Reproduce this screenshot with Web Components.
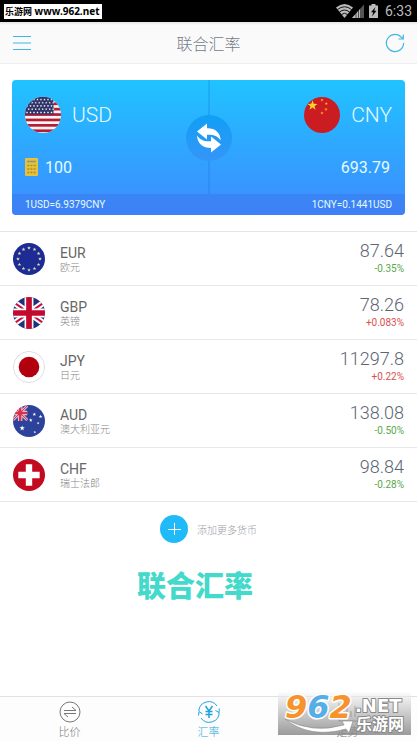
<!DOCTYPE html>
<html lang="zh-CN">
<head>
<meta charset="utf-8">
<meta name="viewport" content="width=device-width, initial-scale=1">
<title>联合汇率</title>
<style>
  body {
    margin: 0;
    background: #fff;
    font-family: Roboto, "Noto Sans CJK SC", sans-serif;
    font-weight: 300;
    color: #555;
  }
</style>
</head>
<body>
<rate-app></rate-app>

<script>
const star = (x, y, r, fill) => {
  const points = [];
  for (let i = 0; i < 10; i++) {
    const a = Math.PI * i / 5 - Math.PI / 2;
    const d = i % 2 ? r * 0.4 : r;
    points.push((x + d * Math.cos(a)).toFixed(2) + ',' + (y + d * Math.sin(a)).toFixed(2));
  }
  return `<polygon points="${points.join(' ')}" fill="${fill}"/>`;
};

const range = n => Array.from({ length: n }, (_, i) => i);

// every flag is drawn on a 36x36 field and clipped to a circle
const flags = {
  USD: `<rect width="36" height="36" fill="#f6f4f6"/>
    ${range(7).map(i => `<rect y="${i * 5.4}" width="36" height="2.7" fill="#b71c33"/>`).join('')}
    <rect width="28.5" height="17.4" fill="#2f3468"/>
    ${range(5).map(r => range(8).map(c => star(2 + c * 3.5 + (r % 2) * 1.7, 2.6 + r * 3.2, 1.3, '#fff')).join('')).join('')}`,
  CNY: `<rect width="36" height="36" fill="#cb1c22"/>
    ${star(8.5, 8.5, 5.2, '#fed130')}${star(18, 3, 1.8, '#fba52c')}${star(22.3, 6.5, 1.8, '#fba52c')}
    ${star(22, 12.3, 1.8, '#fba52c')}${star(18, 16, 1.8, '#fba52c')}`,
  EUR: `<rect width="36" height="36" fill="#1c2c94"/>
    ${range(12).map(i => star(18 + 12.4 * Math.sin(i * Math.PI / 6), 18 - 12.4 * Math.cos(i * Math.PI / 6), 2.2, '#e8dcae')).join('')}`,
  GBP: `<rect width="36" height="36" fill="#22307c"/>
    <path d="M-2 4 38 32M38 4-2 32" stroke="#fff" stroke-width="7"/>
    <path d="M-2 4 38 32M38 4-2 32" stroke="#c8103a" stroke-width="2.4"/>
    <path d="M18 0V36M0 18H36" stroke="#fff" stroke-width="10"/>
    <path d="M18 0V36M0 18H36" stroke="#c4092f" stroke-width="6.4"/>`,
  JPY: `<rect width="36" height="36" fill="#fff"/>
    <circle cx="18" cy="18" r="17.6" fill="none" stroke="#ccc" stroke-width="0.8"/>
    <circle cx="18" cy="18" r="11.6" fill="#b3000f"/>`,
  AUD: `<rect width="36" height="36" fill="#2d429b"/>
    <path d="M0 1 16 17M16 1 0 17" stroke="#f3dfe6" stroke-width="3"/>
    <path d="M8 0V18M0 9H16" stroke="#f3dfe6" stroke-width="5"/>
    <path d="M0 1 16 17M16 1 0 17" stroke="#d93250" stroke-width="1.2"/>
    <path d="M8 0V18M0 9H16" stroke="#d93250" stroke-width="3"/>
    ${star(10.3, 26, 3.2, '#fff')}${star(20, 17, 2.2, '#fff')}${star(24, 10.5, 2.2, '#fff')}
    ${star(31, 13, 2.2, '#fff')}${star(28.3, 20.5, 1.6, '#fff')}${star(24.5, 30.5, 1.6, '#fff')}`,
  CHF: `<rect width="36" height="36" fill="#c30a20"/>
    <path d="M14.4 6h7.2v8.4H30v7.2h-8.4V30h-7.2v-8.4H6v-7.2h8.4z" fill="#fff"/>`
};

class CurrencyFlag extends HTMLElement {
  connectedCallback() {
    const shadow = this.attachShadow({ mode: 'open' });
    shadow.innerHTML = `
      <style>
        :host {
          display: block;
          flex: none;
          width: var(--flag-size, 32px);
          height: var(--flag-size, 32px);
          border-radius: 50%;
          overflow: hidden;
        }
        svg { display: block; width: 100%; height: 100%; }
      </style>
      <svg viewBox="0 0 36 36" aria-hidden="true">${flags[this.getAttribute('code')]}</svg>
    `;
  }
}
customElements.define('currency-flag', CurrencyFlag);

class StatusBar extends HTMLElement {
  connectedCallback() {
    const shadow = this.attachShadow({ mode: 'open' });
    shadow.innerHTML = `
      <style>
        :host {
          display: flex;
          align-items: center;
          justify-content: space-between;
          height: 22px;
          padding: 0 5px 0 4px;
          background: #000;
          color: #bbb;
        }
        .site {
          padding: 0 2px 0 1px;
          background: #fff;
          color: #000;
          font: bold 10px/14px "Noto Sans", "Noto Sans CJK SC", sans-serif;
          white-space: nowrap;
        }
        .site small { font-size: 9px; }
        .state { display: flex; align-items: center; font-size: 14px; font-weight: 400; line-height: 22px; }
        time { margin-left: 5px; }
        svg { display: block; }
      </style>
      <span class="site"><small>乐游网</small> www.962.net</span>
      <div class="state">
        <svg width="44" height="16" viewBox="0 0 44 16" aria-hidden="true">
          <path d="M0 4.5Q8.500-2.500 17 4.500L8.500 15z" fill="#bbb"/>
          <path d="M1.500 6.500Q8.500 1 15.500 6.500M3.500 9Q8.500 5 13.500 9M5.500 11.500Q8.500 9 11.500 11.500" fill="none" stroke="#000" stroke-width="0.900"/>
          <path d="M16 15 28 1.500V15z" fill="#555"/>
          <path d="M16 15 24 6V15z" fill="#bbb"/>
          <path d="M20 9V15M22.500 6V15" stroke="#000" stroke-width="0.600"/>
          <path d="M33 2.500h2.500V1h4v1.500H42V15h-9z" fill="#bbb"/>
          <path d="M39.500 4 35 9.200h2.300L36 13.500 40.500 7.800h-2.300z" fill="#000"/>
        </svg>
        <time>6:33</time>
      </div>
    `;
  }
}
customElements.define('status-bar', StatusBar);

class AppHeader extends HTMLElement {
  connectedCallback() {
    const shadow = this.attachShadow({ mode: 'open' });
    shadow.innerHTML = `
      <style>
        :host {
          display: flex;
          align-items: center;
          justify-content: space-between;
          height: 41px;
          padding: 0 12px;
          border-bottom: 1px solid #eee;
          background: linear-gradient(#e4e4e4, #fafafa 3px);
        }
        h1 { margin: 0; font-size: 16px; font-weight: inherit; color: #747b8a; }
        button { padding: 0; border: 0; background: none; cursor: pointer; }
        svg { display: block; fill: none; stroke: #3fb6e3; }
      </style>
      <button aria-label="菜单">
        <svg width="20" height="20" viewBox="0 0 20 20"><path d="M1 3.500H19M1 10H19M1 16.500H19"/></svg>
      </button>
      <h1><slot></slot></h1>
      <button aria-label="刷新">
        <svg width="20" height="20" viewBox="0 0 20 20" stroke-width="1.200">
          <path d="M18.600 10A8.600 8.600 0 1 1 15.800 3.700L18 6M18.300 1.500V6H13.500"/>
        </svg>
      </button>
    `;
  }
}
customElements.define('app-header', AppHeader);

class ConvertCard extends HTMLElement {
  connectedCallback() {
    const shadow = this.attachShadow({ mode: 'open' });
    shadow.innerHTML = `
      <style>
        :host {
          display: block;
          position: relative;
          margin: 16px 12px;
          border-radius: 4px;
          overflow: hidden;
          background: linear-gradient(#20c3ff, #3e8bff);
          color: #e6fbff;
        }
        .sides { display: flex; height: 114px; }
        .side {
          --flag-size: 36px;
          flex: 1;
          display: flex;
          flex-direction: column;
          gap: 24px;
          box-sizing: border-box;
          padding: 17px 13px 0;
        }
        .side + .side { align-items: flex-end; border-left: 2px solid rgba(20,110,220,.22); }
        .currency { display: flex; align-items: center; gap: 11px; font-size: 21px; }
        .amount { display: flex; align-items: center; gap: 7px; height: 20px; font-size: 16px; font-weight: 400; }
        .side + .side .amount { padding-right: 2px; }
        input {
          width: 80px;
          padding: 0;
          border: 0;
          background: none;
          color: inherit;
          font: inherit;
          outline: 0;
        }
        svg { display: block; }
        .rates {
          display: flex;
          justify-content: space-between;
          padding: 0 13px;
          background: rgba(60,110,225,.35);
          font-size: 10px;
          font-weight: 400;
          line-height: 21px;
        }
        /* sits over the divider between both currencies */
        .swap {
          position: absolute;
          left: 50%;
          top: 50%;
          display: grid;
          place-items: center;
          width: 46px;
          height: 46px;
          margin: -33px 0 0 -23px;
          padding: 0;
          border: 0;
          border-radius: 50%;
          background: linear-gradient(#109ff5, #3595f8);
          cursor: pointer;
        }
      </style>
      <div class="sides">
        <div class="side">
          <div class="currency"><currency-flag code="USD"></currency-flag><span>USD</span></div>
          <label class="amount">
            <svg width="13" height="18" viewBox="0 0 13 18" aria-hidden="true">
              <rect width="13" height="18" rx="1" fill="#e6c13c"/>
              <path d="M2 3.500h9" stroke="#7f9a83" stroke-width="1.500"/>
              <path d="M2.500 7.500h8M2.500 11h8M2.500 14.500h8" stroke="#a98826" stroke-width="1.600" stroke-dasharray="1.800 1.300"/>
            </svg>
            <input value="100" inputmode="decimal" aria-label="USD">
          </label>
        </div>
        <div class="side">
          <div class="currency"><currency-flag code="CNY"></currency-flag><span>CNY</span></div>
          <div class="amount">693.79</div>
        </div>
      </div>
      <div class="rates"><span>1USD=6.9379CNY</span><span>1CNY=0.1441USD</span></div>
      <button class="swap" aria-label="互换">
        <svg width="28" height="32" viewBox="0 0 28 32" fill="#fff">
          <path d="M2 9.500 12 1.500V6.200C20 6 25.500 10.500 25.700 18.500C22.500 13.500 18 12.500 12 12.800V17.500z"/>
          <path d="M26 22.500 16 30.500V26C8 26 2.200 21.500 2 13.500C5.500 18.700 10 19.500 16 19.200V14.500z"/>
        </svg>
      </button>
    `;
  }
}
customElements.define('convert-card', ConvertCard);

class RateRow extends HTMLElement {
  connectedCallback() {
    const shadow = this.attachShadow({ mode: 'open' });
    const code = this.getAttribute('code');
    const change = this.getAttribute('change');
    shadow.innerHTML = `
      <style>
        :host {
          display: flex;
          align-items: center;
          gap: 15px;
          box-sizing: border-box;
          height: 54px;
          padding: 0 13px;
          border-bottom: 1px solid #e8e8e8;
        }
        div { display: flex; flex-direction: column; }
        .value { margin-left: auto; text-align: right; }
        .code { font-size: 14px; font-weight: 400; line-height: 18px; color: #666; }
        .name { font-size: 10px; line-height: 12px; color: #858585; }
        .rate { font-size: 18px; line-height: 20px; color: #5d6574; }
        .change { font-size: 10px; font-weight: 400; line-height: 16px; color: #5aa84c; }
        .change.up { color: #d9514e; }
      </style>
      <currency-flag code="${code}"></currency-flag>
      <div>
        <span class="code">${code}</span>
        <span class="name"><slot></slot></span>
      </div>
      <div class="value">
        <span class="rate">${this.getAttribute('rate')}</span>
        <span class="change ${change.startsWith('+') ? 'up' : ''}">${change}</span>
      </div>
    `;
    this.setAttribute('role', 'listitem');
  }
}
customElements.define('rate-row', RateRow);

class AddCurrency extends HTMLElement {
  connectedCallback() {
    const shadow = this.attachShadow({ mode: 'open' });
    shadow.innerHTML = `
      <style>
        :host { display: flex; justify-content: center; margin-top: 13px; }
        button {
          display: flex;
          align-items: center;
          gap: 9px;
          padding: 0;
          border: 0;
          background: none;
          color: #9a9ca5;
          font: inherit;
          font-size: 10px;
          cursor: pointer;
        }
        svg { display: block; }
      </style>
      <button>
        <svg width="28" height="28" viewBox="0 0 28 28" aria-hidden="true">
          <circle cx="14" cy="14" r="14" fill="#20baf9"/>
          <path d="M14.500 8V20M8 14.500H21" stroke="#fff"/>
        </svg>
        <slot></slot>
      </button>
    `;
  }
}
customElements.define('add-currency', AddCurrency);

const tabIcons = {
  compare: '<circle cx="12" cy="12" r="10"/><path d="M6 10.500H18L14 7M18 13.500H6L10 17"/>',
  rates: `<path d="M1.800 11A10 10 0 0 1 20 6M22.200 12.500A10 10 0 0 1 4 18M22.300 8.500 22 12.500 18.500 10.500M5.500 14 2 11.500 1.500 15.500"/>
    <path d="M8.500 6 12 11 15.500 6M12 11V18M8.500 11.500H15.500M8.500 14.500H15.500" stroke-width="1.500"/>`,
  trend: '<path d="M3 3V21H21M7 17V12M11 17V8M15 17V11M19 17V6"/>'
};

class TabItem extends HTMLElement {
  connectedCallback() {
    const shadow = this.attachShadow({ mode: 'open' });
    shadow.innerHTML = `
      <style>
        :host { display: block; flex: 1; color: #777; }
        :host([active]) { color: #1fa5dc; }
        a {
          display: flex;
          flex-direction: column;
          align-items: center;
          padding-top: 3px;
          color: inherit;
          font-size: 11px;
          line-height: 18px;
          text-decoration: none;
        }
        svg { display: block; fill: none; stroke: currentColor; }
      </style>
      <a href="#${this.getAttribute('icon')}">
        <svg width="24" height="24" viewBox="0 0 24 24" aria-hidden="true">${tabIcons[this.getAttribute('icon')]}</svg>
        <slot></slot>
      </a>
    `;
  }
}
customElements.define('tab-item', TabItem);

class SiteBadge extends HTMLElement {
  connectedCallback() {
    const shadow = this.attachShadow({ mode: 'open' });
    shadow.innerHTML = `
      <style>
        /* floats over the tab bar in the corner */
        :host {
          position: absolute;
          right: 6px;
          bottom: 6px;
          width: 133px;
          height: 43px;
          background: linear-gradient(rgba(250,250,250,.5), rgba(130,130,130,.8));
        }
        svg { display: block; overflow: visible; font-family: "DejaVu Sans", "Noto Sans CJK SC", sans-serif; font-weight: bold; }
        text { paint-order: stroke; stroke-linejoin: round; }
      </style>
      <svg width="133" height="43" viewBox="0 0 133 43">
        <text x="7" y="26" font-size="32" font-style="italic" fill="#f7932d" stroke="#fff" stroke-width="3">9<tspan fill="#56aee8">6</tspan>2</text>
        <text x="77" y="20" font-size="18" fill="#fff" stroke="#888" stroke-width="2">.NET</text>
        <path d="M7 27Q34 42 66 33L64 29 75 29 71 41 68 37Q32 47 7 27z" fill="#fff" stroke="#888" stroke-width="0.600"/>
        <text x="78" y="38" font-size="16" fill="#fff" stroke="#888" stroke-width="2">乐游网</text>
      </svg>
    `;
  }
}
customElements.define('site-badge', SiteBadge);

class RateApp extends HTMLElement {
  connectedCallback() {
    const shadow = this.attachShadow({ mode: 'open' });
    shadow.innerHTML = `
      <style>
        :host { display: flex; flex-direction: column; position: relative; min-height: 100vh; }
        main { flex: 1; }
        .list { border-top: 1px solid #e4e4e4; }
        .brand {
          margin: 22px 0 0;
          padding-right: 27px;
          color: #43d9cb;
          font-size: 29px;
          font-weight: 900;
          line-height: 44px;
          text-align: center;
        }
        nav { display: flex; height: 44px; border-top: 1px solid #e2e2e2; background: #fdfdfd; }
      </style>
      <status-bar></status-bar>
      <app-header>联合汇率</app-header>
      <main>
        <convert-card></convert-card>
        <div class="list" role="list">
          <rate-row code="EUR" rate="87.64" change="-0.35%">欧元</rate-row>
          <rate-row code="GBP" rate="78.26" change="+0.083%">英镑</rate-row>
          <rate-row code="JPY" rate="11297.8" change="+0.22%">日元</rate-row>
          <rate-row code="AUD" rate="138.08" change="-0.50%">澳大利亚元</rate-row>
          <rate-row code="CHF" rate="98.84" change="-0.28%">瑞士法郎</rate-row>
        </div>
        <add-currency>添加更多货币</add-currency>
        <p class="brand">联合汇率</p>
      </main>
      <nav>
        <tab-item icon="compare">比价</tab-item>
        <tab-item icon="rates" active>汇率</tab-item>
        <tab-item icon="trend">走势</tab-item>
      </nav>
      <site-badge></site-badge>
    `;
  }
}
customElements.define('rate-app', RateApp);
</script>
</body>
</html>
